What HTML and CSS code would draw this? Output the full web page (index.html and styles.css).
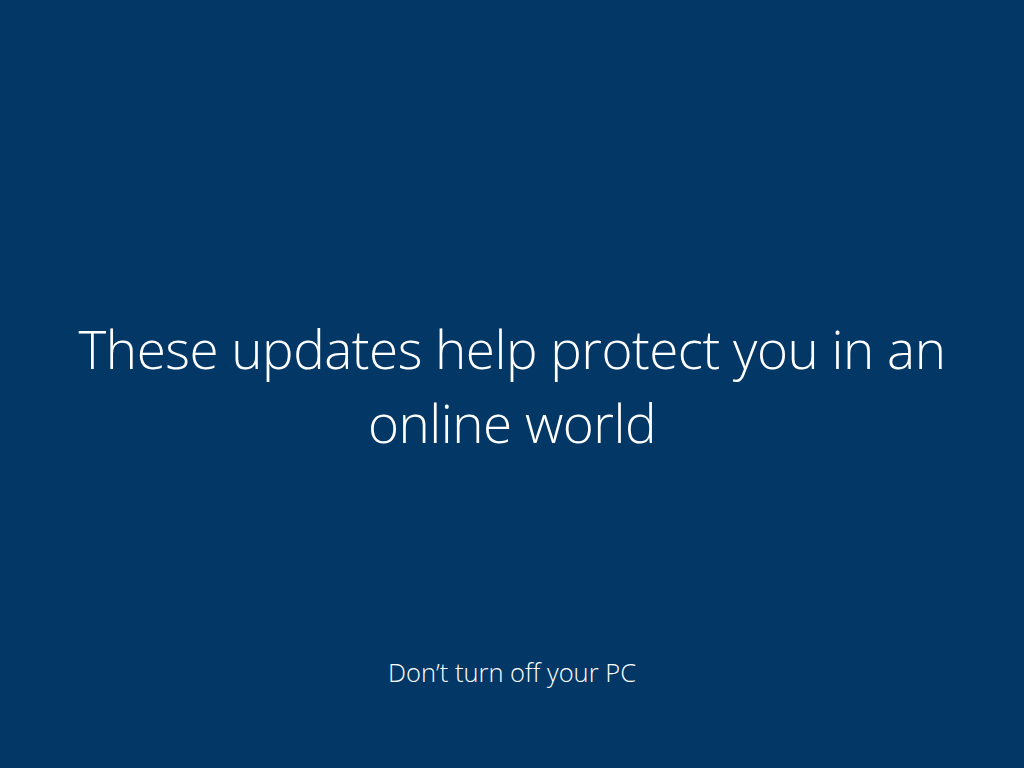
FILE: index.html
```html
<!DOCTYPE html>
<html lang="en">
<head>
    <meta charset="UTF-8">
    <title>Working on updates</title>
    <link rel="stylesheet" href="styles.css">
</head>
<body>
    <div class="screen">
        <div class="message">
            <h1>These updates help protect you in an online world</h1>
        </div>
        <p class="note">Don’t turn off your PC</p>
    </div>
</body>
</html>
```

FILE: styles.css
```css
/* Update screen */
body {
    margin: 0;
    padding: 0;
    background-color: #023766;
    color: #fff;
    font-family: 'Open Sans', 'Noto Sans', sans-serif;
    font-weight: 300;
}
.screen {
    height: 100vh;
    display: flex;
    flex-direction: column;
    align-items: center;
}
.message {
    flex: 1;
    display: flex;
    align-items: center;
    justify-content: center;
    padding-top: 116px;
}
.message h1 {
    margin: 0;
    width: 900px;
    text-align: center;
    font-size: 53px;
    font-weight: 300;
    line-height: 74px;
    letter-spacing: -0.5px;
}
.note {
    margin: 0 0 79px;
    font-size: 25.5px;
    font-weight: 300;
}
```
